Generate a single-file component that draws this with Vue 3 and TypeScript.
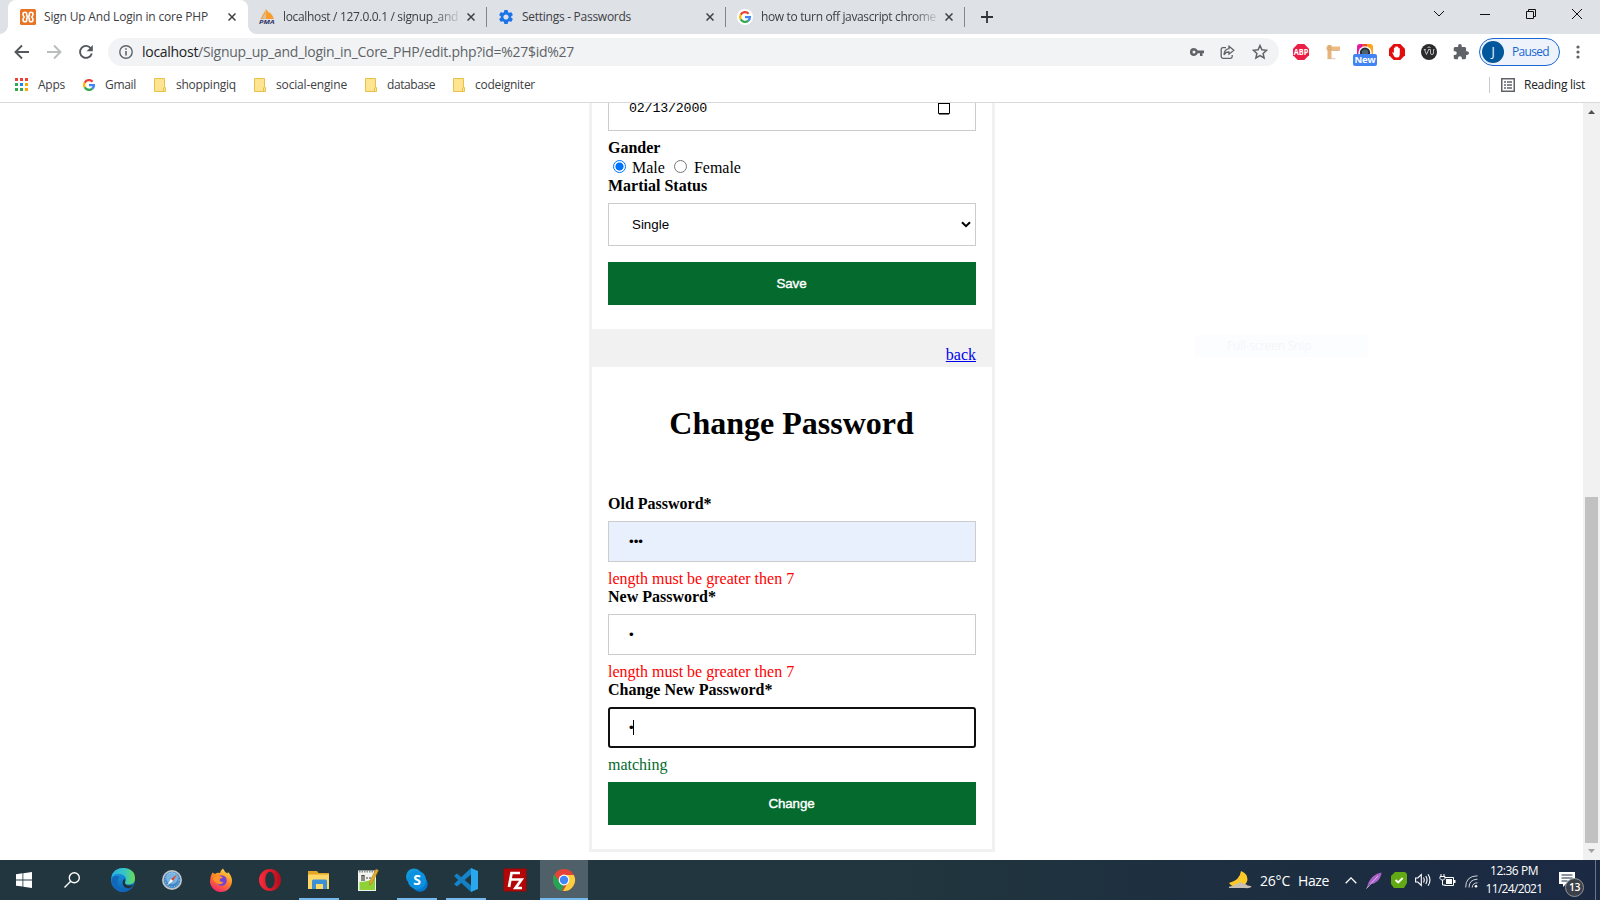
<script setup lang="ts">
import { ref } from 'vue'

interface Tab { title: string; icon: string; width: number; textWidth: number; active?: boolean; fade?: boolean }

const tabs: Tab[] = [
  { title: 'Sign Up And Login in core PHP', icon: 'xampp', width: 240, textWidth: 164, active: true },
  { title: 'localhost / 127.0.0.1 / signup_and', icon: 'pma', width: 239, textWidth: 175, fade: true },
  { title: 'Settings - Passwords', icon: 'gear', width: 239, textWidth: 109 },
  { title: 'how to turn off javascript chrome', icon: 'google', width: 239, textWidth: 175, fade: true },
]

const bookmarks = [
  { name: 'Apps', icon: 'apps', width: 27 },
  { name: 'Gmail', icon: 'google', width: 31 },
  { name: 'shoppingiq', icon: 'folder', width: 60 },
  { name: 'social-engine', icon: 'folder', width: 71 },
  { name: 'database', icon: 'folder', width: 48 },
  { name: 'codeigniter', icon: 'folder', width: 60 },
]

const tasks = [
  { name: 'edge' }, { name: 'safari' }, { name: 'firefox' }, { name: 'opera' },
  { name: 'files', open: true }, { name: 'notepad' }, { name: 'skype', open: true },
  { name: 'code', open: true }, { name: 'filezilla' }, { name: 'chrome', open: true, active: true },
]

const gender = ref('Male')

/* Spreads a label's letters so that it takes the given width in pixels. */
const vFit = {
  mounted(el: HTMLElement, binding: { value: number }) {
    const width = el.getBoundingClientRect().width
    const count = (el.textContent ?? '').length
    if (count) el.style.letterSpacing = `${((binding.value - width) / count).toFixed(3)}px`
  },
}
</script>

<template>
  <div class="screen">
    <header class="strip">
      <div v-for="tab in tabs" :key="tab.title" class="tab" :class="{ active: tab.active }" :style="{ width: tab.width + 'px' }">
        <svg v-if="tab.icon === 'xampp'" class="fav" viewBox="0 0 16 16">
          <rect width="16" height="16" rx="1.500" fill="#e87424" />
          <path d="M6.700 5.500V5Q6.700 3.200 5 3.200 3 3.200 3 5.200 3 6.800 4.300 8 3 9.200 3 10.800 3 12.800 5 12.800 6.700 12.800 6.700 11V9.200Q8 8.200 9.300 9.200V11Q9.300 12.800 11 12.800 13 12.800 13 10.800 13 9.200 11.700 8 13 6.800 13 5.200 13 3.200 11 3.200 9.300 3.200 9.300 5V6.800Q8 7.800 6.700 6.800z" fill="none" stroke="#fff" stroke-width="1.600" />
        </svg>
        <svg v-else-if="tab.icon === 'pma'" class="fav" viewBox="0 0 16 16">
          <path d="M1.500 10 6 2v8zM6.500 10V0q5 4 5.500 10zM10 3q4 3 4.700 7H11.500z" fill="#f89c2c" />
          <path d="M3 9 6 5v5z" fill="#c9c4b8" />
          <text x="0" y="15.400" font-size="6" font-weight="700" font-style="italic" fill="#2e3264" textLength="15.500" lengthAdjust="spacingAndGlyphs">PMA</text>
        </svg>
        <svg v-else-if="tab.icon === 'gear'" class="fav" viewBox="1 1 22 22">
          <path fill="#1a73e8" d="M19.140 12.940c.04-.3.06-.61.06-.94 0-.32-.02-.64-.07-.94l2.030-1.580c.18-.14.23-.41.12-.61l-1.920-3.320c-.12-.22-.37-.29-.59-.22l-2.390.96c-.5-.38-1.030-.7-1.620-.94l-.36-2.540c-.04-.24-.24-.41-.48-.41h-3.840c-.24 0-.43.17-.47.41l-.36 2.540c-.59.24-1.130.57-1.620.94l-2.390-.96c-.22-.08-.47 0-.59.22L2.740 8.870c-.12.21-.08.47.12.61l2.030 1.580c-.05.3-.09.63-.09.94s.02.64.07.94l-2.030 1.580c-.18.14-.23.41-.12.61l1.920 3.320c.12.22.37.29.59.22l2.390-.96c.5.38 1.030.7 1.620.94l.36 2.540c.05.24.24.41.48.41h3.840c.24 0 .44-.17.47-.41l.36-2.540c.59-.24 1.130-.56 1.620-.94l2.390.96c.22.08.47 0 .59-.22l1.920-3.320c.12-.22.07-.47-.12-.61l-2.010-1.580zM12 15.600c-1.980 0-3.600-1.620-3.600-3.600s1.620-3.600 3.600-3.600 3.600 1.620 3.600 3.600-1.620 3.600-3.600 3.600z" />
        </svg>
        <svg v-else class="fav" viewBox="0 0 16 16">
          <circle cx="8" cy="8" r="8" fill="#fff" />
          <g fill="none" stroke-width="2.300">
            <path d="M11.600 4.700A4.900 4.900 0 0 0 3.700 5.700" stroke="#ea4335" />
            <path d="M3.700 5.700a4.900 4.900 0 0 0 0 4.600" stroke="#fbbc05" />
            <path d="M3.700 10.300A4.900 4.900 0 0 0 11.300 11.600" stroke="#34a853" />
            <path d="M11.300 11.600A4.900 4.900 0 0 0 12.900 8.100H8" stroke="#4285f4" />
          </g>
        </svg>
        <span class="title" :class="{ fade: tab.fade }"><span v-fit="tab.textWidth" class="label">{{ tab.title }}</span></span>
        <svg class="close" viewBox="0 0 8 8"><path d="M.5.500l7 7m0-7l-7 7" stroke="#3c4043" stroke-width="1.500" /></svg>
        <i v-if="!tab.active" class="divider"></i>
      </div>
      <div class="plus"><svg width="12" height="12" viewBox="0 0 12 12"><path d="M6 0v12M0 6h12" stroke="#303336" stroke-width="1.800" /></svg></div>
      <div class="window-buttons">
        <svg viewBox="0 0 12 12"><path d="M1 3l5 5 5-5" /></svg>
        <svg viewBox="0 0 12 12"><path d="M1 6.500h10" /></svg>
        <svg viewBox="0 0 12 12"><path d="M1.500 3.500h7v7h-7zM3.500 3.500v-2h7v7h-2" /></svg>
        <svg viewBox="0 0 12 12"><path d="M1 1l10 10M11 1L1 11" /></svg>
      </div>
    </header>

    <div class="toolbar">
      <div class="nav">
        <svg viewBox="0 0 16 16"><path d="M15 8H2M8 1.500L1.500 8 8 14.500" fill="none" stroke="#54585c" stroke-width="1.900" /></svg>
        <svg viewBox="0 0 16 16"><path d="M1 8h13M8 1.500L14.500 8 8 14.500" fill="none" stroke="#babcbe" stroke-width="1.900" /></svg>
        <svg viewBox="0 0 16 16"><path d="M13 4.500A6 6 0 1 0 13.800 9.500" fill="none" stroke="#54585c" stroke-width="1.900" /><path d="M14.800 1v6.200H8.600z" fill="#54585c" /></svg>
      </div>
      <div class="omnibox">
        <svg class="info" viewBox="0 0 14 14"><circle cx="7" cy="7" r="6.200" fill="none" stroke="#5f6368" stroke-width="1.400" /><path d="M7 6v4.500M7 3.200v1.600" stroke="#5f6368" stroke-width="1.600" /></svg>
        <span v-fit="432" class="url label"><b>localhost</b>/Signup_up_and_login_in_Core_PHP/edit.php?id=%27$id%27</span>
        <div class="omni-actions">
          <svg width="14" height="10" viewBox="0 0 14 10"><path d="M4 1a4 4 0 1 0 3.700 5.300H10V9h2.500V6.300H14V3.500H7.700A4 4 0 0 0 4 1zm0 5.500a1.500 1.500 0 1 1 0-3 1.500 1.500 0 0 1 0 3z" fill="#5f6368" /></svg>
          <svg width="15" height="15" viewBox="0 0 15 15" fill="none" stroke="#5f6368" stroke-width="1.300"><path d="M6 2.700H3Q1.200 2.700 1.200 4.500v7Q1.200 13.300 3 13.300h7.500q1.700 0 1.700-1.800V10" /><path d="M9 1.300l4.800 4L9 9.200V7Q5.800 6.800 4 9.800 4.300 4.300 9 3.700z" /></svg>
          <svg width="16" height="16" viewBox="0 0 16 16"><path d="M8 1.500l1.900 4.300 4.700.5-3.500 3.100 1 4.600L8 11.600 3.900 14l1-4.600L1.400 6.300l4.700-.5z" fill="none" stroke="#5f6368" stroke-width="1.500" /></svg>
        </div>
      </div>
      <div class="extensions">
        <svg viewBox="0 0 16 16"><path d="M4.700 0h6.600L16 4.700v6.600L11.300 16H4.700L0 11.300V4.700z" fill="#ed1e45" /><text x=".7" y="11" font-size="8" font-weight="700" fill="#fff" textLength="14.600" lengthAdjust="spacingAndGlyphs">ABP</text></svg>
        <svg viewBox="0 0 16 16"><path d="M2.500 1h4v13.500h-4z" fill="#e7b57b" /><path d="M1.500 2.500h13.500v3.800H1.500z" fill="#edbb82" /><path d="M6.500 6.500h8M2.500 14.700h8" stroke="#b88a59" stroke-opacity=".5" /><circle cx="4.500" cy="4.400" r="1.600" fill="none" stroke="#c08f56" stroke-width=".6" /></svg>
        <div class="camera">
          <svg viewBox="0 0 16 16"><path d="M0 11V3Q0 0 3 0h3v11z" fill="#e21b9b" /><path d="M5 0h6v8H5z" fill="#f04a3c" /><path d="M10 0h3q3 0 3 3v8h-6z" fill="#ffa41c" /><circle cx="8" cy="9" r="6.700" fill="#fff" /><circle cx="8" cy="8.800" r="5.200" fill="#23313c" /><circle cx="8" cy="8.800" r="3.200" fill="#52606c" /></svg>
          <em>New</em>
        </div>
        <svg viewBox="0 0 16 16"><path d="M4.700 0h6.600L16 4.700v6.600L11.300 16H4.700L0 11.300V4.700z" fill="#e40d0d" /><path d="M5.200 12.500L3.200 8.500q.8-.8 1.700.4V4q.9-.9 1.400 0v3-4.300q.8-.8 1.500 0V7 3q.8-.8 1.500 0v4.500V4.300q.8-.7 1.500.2v6q0 2.500-2.500 3-2 .2-3.100-1z" fill="#fff" /></svg>
        <svg viewBox="0 0 16 16"><circle cx="8" cy="8" r="8" fill="#2b2b2e" /><path d="M2.800 5.500h2M3.500 5.500l2 5 2.200-5H7M8 5.500h1.500V9q0 1.500 1.500 1.500T12.500 9V5.500h1M6.500 3.500q1.500-1 3 0" fill="none" stroke="#ccc" stroke-width=".9" /></svg>
        <svg viewBox="1 1 22 22"><path d="M20.500 11H19V7c0-1.100-.9-2-2-2h-4V3.500a2.500 2.500 0 0 0-5 0V5H4c-1.100 0-1.990.9-1.990 2v3.800H3.500a2.700 2.700 0 0 1 0 5.400H2V20c0 1.100.9 2 2 2h3.800v-1.500a2.700 2.700 0 0 1 5.400 0V22H17c1.100 0 2-.9 2-2v-4h1.500a2.500 2.500 0 0 0 0-5z" fill="#5f6368" /></svg>
      </div>
      <div class="profile"><span class="avatar">J</span><span v-fit="37" class="label">Paused</span></div>
      <svg class="dots" viewBox="0 0 4 14" fill="#5f6368"><circle cx="2" cy="2" r="1.600" /><circle cx="2" cy="7" r="1.600" /><circle cx="2" cy="12" r="1.600" /></svg>
    </div>

    <div class="bookmarks">
      <div v-for="mark in bookmarks" :key="mark.name" class="bookmark" :class="mark.icon">
        <svg v-if="mark.icon === 'apps'" width="13" height="13" viewBox="0 0 13 13">
          <path d="M0 0h3v3H0zM5 0h3v3H5zM10 0h3v3h-3z" fill="#ea4335" />
          <path d="M0 5h3v3H0z" fill="#34a853" /><path d="M5 5h3v3H5z" fill="#1a87f0" /><path d="M10 5h3v3h-3z" fill="#fbab05" />
          <path d="M0 10h3v3H0zM5 10h3v3H5z" fill="#34a853" /><path d="M10 10h3v3h-3z" fill="#fbab05" />
        </svg>
        <svg v-else-if="mark.icon === 'google'" width="12" height="12" viewBox="2 2 12 12" fill="none" stroke-width="2.400">
          <path d="M11.600 4.700A4.900 4.900 0 0 0 3.700 5.700" stroke="#ea4335" />
          <path d="M3.700 5.700a4.900 4.900 0 0 0 0 4.600" stroke="#fbbc05" />
          <path d="M3.700 10.300A4.900 4.900 0 0 0 11.300 11.600" stroke="#34a853" />
          <path d="M11.300 11.600A4.900 4.900 0 0 0 12.900 8.100H8" stroke="#4285f4" />
        </svg>
        <svg v-else width="12" height="14" viewBox="0 0 12 14"><path d="M.5.500h10v9h1v4H.5z" fill="#ffe591" stroke="#e8c14a" /><path d="M9.500 13.500v-4" stroke="#e8c14a" /></svg>
        <span v-fit="mark.width" class="label">{{ mark.name }}</span>
      </div>
      <div class="reading">
        <svg width="14" height="14" viewBox="0 0 14 14"><rect x=".75" y=".75" width="12.500" height="12.500" fill="none" stroke="#5f6368" stroke-width="1.500" /><path d="M3 4h2M6 4h5M3 7h2M6 7h5M3 10h2M6 10h5" stroke="#5f6368" stroke-width="1.500" /></svg>
        <span v-fit="61" class="label">Reading list</span>
      </div>
    </div>

    <div class="viewport">
      <main>
        <section class="card first">
          <div class="field date"><span class="date-text">02/13/2000</span>
            <svg width="12" height="13" viewBox="0 0 12 13"><path d="M.5 0h11v11.500H.5z" fill="none" stroke="#000" stroke-width="1" /><path d="M0 0h12v2H0z" /><path d="M1 12.500h10" stroke="#777" /></svg>
          </div>
          <div class="caption">Gander</div>
          <div class="radios">
            <i :class="{ on: gender === 'Male' }" @click="gender = 'Male'"></i><span>Male</span>
            <i :class="{ on: gender === 'Female' }" @click="gender = 'Female'"></i><span>Female</span>
          </div>
          <div class="caption">Martial Status</div>
          <div class="field select"><span>Single</span><svg width="10" height="7" viewBox="0 0 10 7"><path d="M1 1.200l4 4 4-4" fill="none" stroke="#000" stroke-width="2" /></svg></div>
          <button class="save"><span v-fit="30">Save</span></button>
        </section>
        <div class="back"><a href="#">back</a></div>
        <section class="card second">
          <h1>Change Password</h1>
          <div class="caption">Old Password*</div>
          <div class="field filled">•••</div>
          <div class="error">length must be greater then 7</div>
          <div class="caption">New Password*</div>
          <div class="field">•</div>
          <div class="error">length must be greater then 7</div>
          <div class="caption">Change New Password*</div>
          <div class="field focused">•<i class="caret"></i></div>
          <div class="match">matching</div>
          <button><span v-fit="46">Change</span></button>
        </section>
      </main>
      <div class="scrollbar">
        <svg viewBox="0 0 17 17"><path d="M5 11l3.500-4L12 11z" fill="#505050" /></svg>
        <i class="thumb"></i>
        <svg viewBox="0 0 17 17"><path d="M5 6l3.500 4L12 6z" fill="#a3a3a3" /></svg>
      </div>
      <div class="snip"><span v-fit="84">Full-screen Snip</span></div>
    </div>

    <footer class="taskbar">
      <div class="system"><svg width="16" height="16" viewBox="0 0 16 16" fill="#fff"><path d="M0 2.200l6.500-.9v6.200H0zM7.300 1.200L16 0v7.500H7.300zM0 8.400h6.500v6.200L0 13.700zM7.300 8.400H16V16l-8.700-1.200z" /></svg></div>
      <div class="system"><svg width="16" height="16" viewBox="0 0 16 16" fill="none" stroke="#fff" stroke-width="1.400"><circle cx="10.300" cy="5.700" r="5" /><path d="M6.700 9.300L.5 15.500" /></svg></div>
      <div class="tasks">
        <div v-for="task in tasks" :key="task.name" class="task" :class="{ open: task.open, active: task.active }">
          <svg v-if="task.name === 'edge'" viewBox="0 0 24 24">
            <defs>
              <linearGradient id="edgeTop" x1="0" x2="1"><stop stop-color="#28b1e5" /><stop offset=".6" stop-color="#3ac7c0" /><stop offset="1" stop-color="#6bdb4f" /></linearGradient>
              <linearGradient id="edgeLow" x1="0" y1="0" x2="0" y2="1"><stop stop-color="#1b9de2" /><stop offset="1" stop-color="#0c62b8" /></linearGradient>
            </defs>
            <circle cx="12" cy="12" r="12" fill="url(#edgeLow)" />
            <path d="M.2 10Q2 0 12 0q12 .5 12 10.500 0 5.500-6 6-4.500 0-4-2 2.500-4-.5-6.500Q9 4.500 4 6.500 1 8 .2 10z" fill="url(#edgeTop)" />
            <path d="M14 14.300q-.5 3 4.500 3.200 2.500 0 4.500-1.500-1.500 3.500-5 4.500-6-.5-6.500-5.500 0-3 2-4.500 1 1.500.5 3.800z" fill="#21343c" />
            <path d="M8.500 8.800Q5 12 7.500 17.500T16 23Q9 26 3.500 20-1 13.500 2 9q3-2 6.500-.2z" fill="#1267b8" />
          </svg>
          <svg v-else-if="task.name === 'safari'" viewBox="0 0 24 24">
            <circle cx="12" cy="12" r="10" fill="#bfc5c8" /><circle cx="12" cy="12" r="8.300" fill="#4188c6" /><circle cx="12" cy="10" r="6" fill="#79b3df" />
            <path d="M17 6.500l-4 6.500-2-2z" fill="#e3442d" /><path d="M7 17.500l4-6.500 2 2z" fill="#fff" /><circle cx="12" cy="12" r="7" fill="none" stroke="#fff" stroke-opacity=".7" stroke-dasharray=".7 2" />
          </svg>
          <svg v-else-if="task.name === 'firefox'" viewBox="0 0 24 24">
            <defs><linearGradient id="fox" x1=".8" y1="0" x2=".3" y2="1"><stop stop-color="#ffe14d" /><stop offset=".45" stop-color="#ff8a25" /><stop offset="1" stop-color="#f4236b" /></linearGradient></defs>
            <path d="M3.500 4.500L6 6q2.500-2 5-1 .5-3 3-4.500 1.500 3.500 4.500 5l.5-1.500q4 4 4 9a11 11 0 0 1-22 0q0-5 2.500-8.500z" fill="url(#fox)" />
            <circle cx="12.500" cy="12.500" r="5.300" fill="#7542d8" /><path d="M4 10q3-3 6.500-2 2 .3 3.500 1.800-3.500.7-3.500 2.400 1 2 4 2-2.500 3.500-6.500 1.300Q4.500 13.500 4 10z" fill="#ff9328" />
          </svg>
          <svg v-else-if="task.name === 'opera'" viewBox="0 0 24 24">
            <defs><linearGradient id="op" x2="1"><stop stop-color="#ff2b3a" /><stop offset="1" stop-color="#b50d1c" /></linearGradient></defs>
            <path fill-rule="evenodd" d="M12 1a11 11 0 1 0 0 22 11 11 0 0 0 0-22zm0 2.700c2.900 0 4.700 3.700 4.700 8.300S14.900 20.300 12 20.300 7.300 16.600 7.300 12 9.100 3.700 12 3.700z" fill="url(#op)" />
          </svg>
          <svg v-else-if="task.name === 'files'" viewBox="0 0 24 24">
            <path d="M1 3h9l1.500 2H22v15H1z" fill="#e2a526" /><path d="M1 6.500h21V21H1z" fill="#ffd766" /><path d="M5 21v-8q0-1.500 1.500-1.500h12Q20 11.500 20 13v8h-4v-5H9v5z" fill="#3c91d6" />
          </svg>
          <svg v-else-if="task.name === 'notepad'" viewBox="0 0 24 24">
            <path d="M2 2.500h18V23H2z" fill="#f1f3ed" /><path d="M3.500 14q8 0 15.500-4v12H3.500z" fill="#8ed238" /><path d="M3 3.500h16" stroke="#8b928d" stroke-width="2" stroke-dasharray="1.500 1" /><path d="M6 13V7.500h2V13M10 10h2M13 10h2" fill="none" stroke="#444" stroke-width="1.200" /><path d="M20 1l2.500 1.500L16 15l-2.500 2 .3-3.500z" fill="#e5ac28" stroke="#9f7223" stroke-width=".5" />
          </svg>
          <svg v-else-if="task.name === 'skype'" viewBox="0 0 24 24">
            <circle cx="9" cy="8.500" r="8" fill="#1298dc" /><circle cx="15" cy="16" r="7.700" fill="#0678cf" /><circle cx="12" cy="12" r="9.200" fill="#0b91e0" /><text x="12" y="17" text-anchor="middle" font-size="14" font-weight="700" fill="#fff">S</text>
          </svg>
          <svg v-else-if="task.name === 'code'" viewBox="0 0 24 24">
            <path d="M17 0l7 3v18l-7 3z" fill="#29a8ee" /><path d="M17 0v6.500L3 18.500 0 16z" fill="#1684ca" /><path d="M17 24v-6.500L3 5.500 0 8z" fill="#1580c4" />
          </svg>
          <svg v-else-if="task.name === 'filezilla'" viewBox="0 0 24 24">
            <rect x=".8" y=".8" width="22.400" height="22.400" fill="#b40606" stroke="#8c0b0b" stroke-dasharray="1.500 1" /><path d="M6 19L8.500 5H17M7.500 11.500H13M12 11.500h6.500l-6 8.500h6.500" fill="none" stroke="#fff" stroke-width="2.700" />
          </svg>
          <svg v-else viewBox="0 0 24 24">
            <circle cx="12" cy="12" r="11" fill="#e44336" /><path d="M1.200 10Q1 6.500 2.500 6.500L8 14.500l4 2.500-2 6A11 11 0 0 1 1.200 10z" fill="#26a455" /><path d="M12 7h9.800A11 11 0 0 1 11 23l5-8.500z" fill="#fdcd3e" /><circle cx="12" cy="12" r="5.400" fill="#fff" /><circle cx="12" cy="12" r="4.200" fill="#4285f4" />
          </svg>
        </div>
      </div>
      <div class="tray">
        <svg class="moon" width="24" height="20" viewBox="0 0 24 20"><path d="M13 1q-1 9-12 12 2.500 4 9 4 8-.5 9.500-7Q19.500 3.500 13 1z" fill="#fcc928" /><path d="M1 18q-1-2 4-2 1-2.500 4-1.500 3-4 7-.5 3 0 3.500 1.500 4 .3 4 1.500-2 1.500-7 1z" fill="#c8bfb5" /></svg>
        <span class="temp"><span v-fit="30" class="label">26°C</span></span>
        <span class="haze"><span v-fit="31" class="label">Haze</span></span>
        <svg class="up" width="12" height="7" viewBox="0 0 12 7"><path d="M.7 6.200L6 .9l5.300 5.300" fill="none" stroke="#fff" stroke-width="1.300" /></svg>
        <svg class="feather" width="16" height="17" viewBox="0 0 16 17"><path d="M1 16Q2 9 7 4.500 11 1 15.500.500 15 6 11 9.500 7.500 12.500 3.500 12z" fill="#a964c9" /><path d="M.5 16.500L12 4" stroke="#ddb3ee" /></svg>
        <svg class="shield" width="16" height="16" viewBox="0 0 16 16"><path d="M4 0h10l2 2v9l-3 5H3l-3-4V4z" fill="#62aa13" /><path d="M4.500 8l2.700 2.500L11.700 6" fill="none" stroke="#fff" stroke-width="1.900" /></svg>
        <svg class="sound" width="16" height="14" viewBox="0 0 16 14" fill="none" stroke="#fff" stroke-width="1.100"><path d="M.6 5h2.200l3.500-3.500v11L2.800 9H.6zM8.500 4.500q1.500 2.500 0 5M10.800 3q2.500 4 0 8M13 1.200q4 5.800 0 11.600" /></svg>
        <svg class="battery" width="17" height="13" viewBox="0 0 17 13"><path d="M5.500 3.500h9v8h-9" fill="none" stroke="#fff" /><path d="M7 5h6v5H7zM15 6h1.500v3H15z" fill="#fff" /><path d="M2 0v2M5 0v2M1 2.500h5v2L4.500 6h-2L1 4.500zM3.500 6v5h3" fill="none" stroke="#fff" /></svg>
        <svg class="wifi" width="13" height="13" viewBox="0 0 13 13" fill="none" stroke="#fff"><path d="M.7 12.500Q.5 1 12.500.800M4 12.500Q4 4.500 12.500 4.200M7.200 12.500q.3-4.500 5.300-4.700" stroke-opacity=".8" /><circle cx="11" cy="11.200" r="1.300" fill="#fff" stroke="none" /></svg>
        <div class="clock"><span v-fit="48" class="label">12:36 PM</span><span v-fit="57" class="label">11/24/2021</span></div>
        <div class="notice"><svg width="16" height="15" viewBox="0 0 16 15"><path d="M0 0h16v12H7l-3 3v-3H0z" fill="#fff" /><path d="M2.500 3h11M2.500 6h11M2.500 9h6" stroke="#1b2a43" /></svg><em>13</em></div>
        <i class="edge"></i>
      </div>
    </footer>
  </div>
</template>

<style>
html, body { margin: 0; overflow: hidden; }
</style>

<style scoped>
* { box-sizing: border-box; }
.screen { width: 1600px; height: 900px; display: flex; flex-direction: column; background: #fff; overflow: hidden; font: 12px/16px "Open Sans", "Noto Sans", sans-serif; color: #3c4043; }
.label { white-space: nowrap; display: inline-block; }
svg { display: block; flex: none; }

.strip { height: 34px; background: #dee1e6; display: flex; padding-left: 8px; flex: none; }
.tab { height: 34px; display: flex; align-items: center; padding: 0 12px 0 11px; flex: none; position: relative; }
.tab.active { background: #fff; border-radius: 8px 8px 0 0; padding-left: 12px; }
.tab.active::before, .tab.active::after { content: ""; position: absolute; bottom: 0; width: 8px; height: 8px; }
.tab.active::before { left: -8px; background: radial-gradient(circle at 0 0, #dee1e6 7.5px, #fff 8px); }
.tab.active::after { right: -8px; background: radial-gradient(circle at 100% 0, #dee1e6 7.5px, #fff 8px); }
.fav { width: 16px; height: 16px; margin-right: 8px; overflow: visible; }
.title { flex: 1; white-space: nowrap; height: 16px; }
.title.fade { -webkit-mask-image: linear-gradient(90deg, #000 calc(100% - 27px), transparent calc(100% + 3px)); mask-image: linear-gradient(90deg, #000 calc(100% - 27px), transparent calc(100% + 3px)); }
.close { width: 8px; height: 8px; margin-left: 7px; }
.divider { position: absolute; right: 0; top: 7px; width: 1px; height: 20px; background: #80868b; }
.plus { width: 34px; margin-left: 5px; display: flex; align-items: center; justify-content: center; }
.window-buttons { margin-left: auto; display: flex; }
.window-buttons svg { width: 12px; height: 12px; margin: 8px 17px; fill: none; stroke: #111; stroke-width: 1; }

.toolbar { height: 34px; display: flex; align-items: center; flex: none; padding-top: 2px; }
.nav { display: flex; gap: 16px; padding-left: 14px; width: 108px; }
.nav svg { width: 16px; height: 16px; }
.omnibox { width: 1171px; height: 28px; border-radius: 14px; background: #f1f3f4; display: flex; align-items: center; padding-left: 11px; }
.info { width: 14px; height: 14px; }
.url { margin-left: 9px; font-size: 14px; line-height: 20px; color: #5f6368; }
.url b { font-weight: 400; color: #202124; }
.omni-actions { margin-left: auto; width: 97px; padding-right: 3px; display: flex; align-items: center; justify-content: space-around; }
.extensions { display: flex; align-items: center; gap: 16px; padding-left: 14px; width: 200px; }
.extensions > svg, .camera svg { width: 16px; height: 16px; }
.camera { position: relative; }
.camera em { position: absolute; left: -4px; top: 10px; width: 24px; height: 12px; border-radius: 2px; background: #4284f3; color: #fff; font: 700 9.5px/12px "Open Sans", sans-serif; text-align: center; letter-spacing: -0.1px; }
.profile { width: 81px; height: 28px; border: 1px solid #1967d2; border-radius: 14px; background: #edf2fb; color: #1967d2; display: flex; align-items: center; padding-left: 2px; }
.avatar { width: 22px; height: 22px; border-radius: 50%; background: #01579b; color: #fff; line-height: 22px; text-align: center; margin-right: 8px; font-size: 12px; }
.dots { width: 4px; height: 14px; margin-left: 16px; }

.bookmarks { height: 34px; flex: none; display: flex; align-items: center; padding-left: 15px; padding-right: 15px; padding-bottom: 1px; }
.bookmark { display: flex; align-items: center; gap: 10px; margin-right: 18px; }
.bookmark.google, .bookmark.folder { gap: 10px; }
.reading { margin-left: auto; display: flex; align-items: center; gap: 9px; height: 16px; padding-left: 11px; border-left: 1px solid #c8cacd; color: #202124; }

.viewport { height: 758px; flex: none; border-top: 1px solid #d7d9dc; display: flex; position: relative; overflow: hidden; font: 16px/18px "Liberation Serif", serif; color: #000; }
main { width: 406px; margin-left: 589px; height: 749px; background: #f1f1f1; }
.card { margin: 0 3px; padding: 0 16px; background: #fff; overflow: hidden; }
.first { height: 226px; }
.second { height: 482px; }
.field { height: 41px; margin: 8px 0; border: 1px solid #ccc; padding: 0 20px; display: flex; align-items: center; font: 13.333px/15px "Liberation Sans", sans-serif; color: #000; }
.filled { background: #e8f0fe; }
.focused { border: 2px solid #101010; border-radius: 3px; padding-left: 19px; }
.caret { width: 1px; height: 15px; background: #000; margin-left: -1px; }
.date { margin-top: -15px; height: 43px; padding: 0 25px 2px 20px; justify-content: space-between; }
.date-text { font: 13.333px/15px "Liberation Mono", monospace; letter-spacing: -0.2px; }
.caption { font-weight: 700; height: 18px; }
.radios { height: 20px; line-height: 20px; display: flex; }
.radios i { width: 13px; height: 13px; margin: 3px 6px 0 5px; border: 1px solid #767676; border-radius: 50%; }
.radios span + i { margin-left: 9px; margin-right: 7px; }
.radios i.on { border-color: #0075ff; background: radial-gradient(circle, #0075ff 3.7px, #fff 4.4px); }
.radios span { padding-top: 1px; }
.select { height: 43px; padding: 0 4px 0 23px; justify-content: space-between; margin-bottom: 16px; }
button { display: block; width: 100%; height: 43px; margin: 8px 0 0; padding: 0 1px 0 0; border: 0; background: #046a2e; color: #fff; font: 13.333px/15px "Liberation Sans", sans-serif; -webkit-text-stroke: .4px #fff; }
.back { height: 38px; padding: 17px 19px 0 0; text-align: right; }
.back a { color: #0000ee; }
h1 { margin: 38px 0 0; padding-right: 1px; height: 90px; font-size: 32px; line-height: 37px; font-weight: 700; text-align: center; }
.error { color: #f00; }
.match { color: #046a2e; }
.scrollbar { width: 17px; margin-left: auto; background: #f1f1f1; display: flex; flex-direction: column; }
.scrollbar svg { width: 17px; height: 17px; }
.thumb { width: 13px; height: 346px; margin: auto 2px 0; background: #c1c1c1; }
.snip { position: absolute; left: 1195px; top: 232px; width: 173px; height: 22px; padding-left: 32px; background: #fbfdff; color: #f7f5f8; font: 12px/22px "Open Sans", sans-serif; }

.taskbar { height: 40px; flex: none; display: flex; background: linear-gradient(90deg, #21363e 0%, #21363e 55%, #1d2f40 75%, #1b2943 100%); color: #fff; }
.system { width: 48px; display: flex; align-items: center; justify-content: center; }
.tasks { display: flex; gap: 1px; margin-left: 3px; }
.task { width: 48px; display: flex; align-items: center; justify-content: center; position: relative; }
.task svg { width: 24px; height: 24px; }
.task.active { background: #4f6068; }
.task.open::after { content: ""; position: absolute; left: 4px; right: 4px; bottom: 0; height: 2px; background: #76b9ed; }
.task.active::after { left: 0; right: 0; }
.tray { margin-left: auto; width: 372px; display: flex; align-items: center; position: relative; }
.temp, .haze { font-size: 14px; line-height: 20px; white-space: nowrap; margin-top: 2px; }
.temp { margin-left: 8px; width: 38px; }
.haze { width: 47px; }
.up { width: 12px; margin-right: 9px; }
.feather { margin-right: 9px; }
.shield { margin-right: 8px; }
.sound { margin-right: 8px; }
.battery { margin-right: 9px; }
.wifi { margin-top: 3px; }
.clock { width: 58px; margin-left: 7px; display: flex; flex-direction: column; align-items: center; line-height: 18px; }
.notice { position: relative; margin-left: 16px; width: 16px; height: 15px; margin-top: -2px; }
.notice em { position: absolute; left: 6px; top: 6px; width: 19px; height: 19px; border-radius: 50%; background: #3b3f48; border: 1px solid #90949b; font: 600 10.5px/16px "Open Sans", sans-serif; text-align: center; letter-spacing: -.4px; }
.edge { position: absolute; right: 4px; top: 0; width: 1px; height: 40px; background: #6b7585; }
</style>
